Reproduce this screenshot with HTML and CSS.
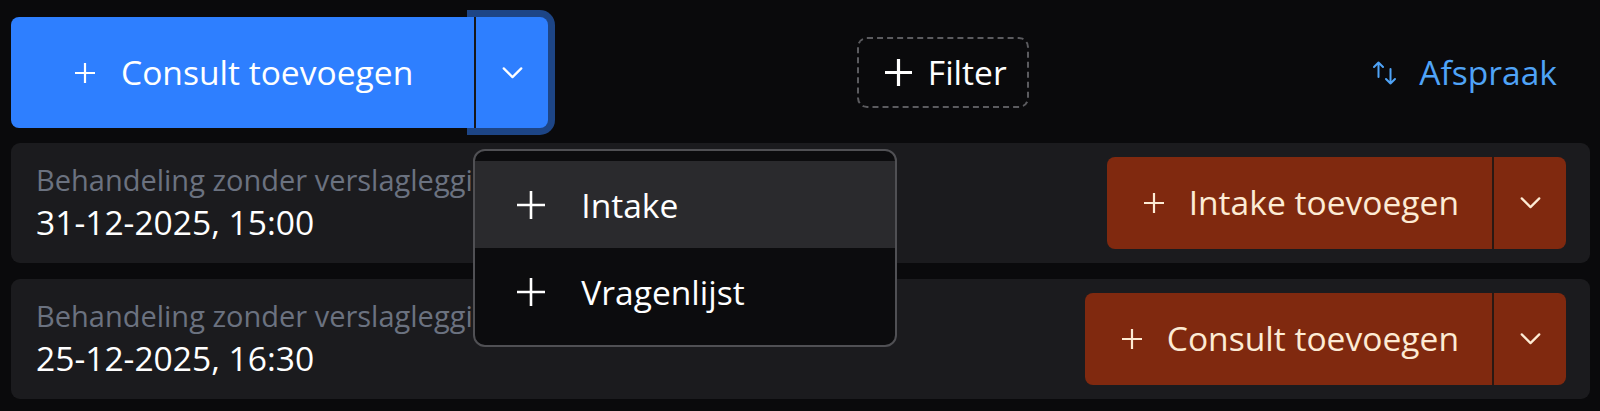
FILE: index.html
```html
<!DOCTYPE html>
<html lang="nl">
<head>
<meta charset="utf-8">
<title>Consulten</title>
<link rel="stylesheet" href="styles.css">
</head>
<body>
<div class="page">
  <header class="toolbar">
    <div class="split split--primary">
      <button class="split__main" type="button">
        <svg class="icon-plus" viewBox="0 0 20 20" aria-hidden="true"><path d="M10 0V20M0 10H20"/></svg>
        <span>Consult toevoegen</span>
      </button>
      <div class="split__more-wrap">
        <button class="split__more is-open" type="button" aria-label="Meer opties">
          <svg class="icon-chevron" viewBox="0 0 22 13" aria-hidden="true"><path d="M1.5 1.5L11 11L20.5 1.5"/></svg>
        </button>
        <div class="menu">
          <div class="menu__item is-active">
            <svg class="menu__plus" viewBox="0 0 28 28" aria-hidden="true"><path d="M14 0V28M0 14H28"/></svg>
            <span>Intake</span>
          </div>
          <div class="menu__item">
            <svg class="menu__plus" viewBox="0 0 28 28" aria-hidden="true"><path d="M14 0V28M0 14H28"/></svg>
            <span>Vragenlijst</span>
          </div>
        </div>
      </div>
    </div>

    <button class="filter" type="button">
      <svg class="filter__plus" viewBox="0 0 27 27" aria-hidden="true"><path d="M13.5 0V27M0 13.5H27"/></svg>
      <span>Filter</span>
    </button>

    <button class="sort" type="button">
      <svg class="sort__icon" viewBox="0 0 24 24" aria-hidden="true">
        <path d="M5.5 16V1.5M1 6L5.5 1.5L10 6"/>
        <path d="M17.5 8V22.5M13 18L17.5 22.5L22 18"/>
      </svg>
      <span>Afspraak</span>
    </button>
  </header>

  <main class="list">
    <section class="row">
      <div class="row__text">
        <div class="row__type">Behandeling zonder verslaglegging</div>
        <div class="row__date">31-12-2025, 15:00</div>
      </div>
      <div class="split split--accent">
        <button class="split__main" type="button">
          <svg class="icon-plus" viewBox="0 0 20 20" aria-hidden="true"><path d="M10 0V20M0 10H20"/></svg>
          <span>Intake toevoegen</span>
        </button>
        <button class="split__more" type="button" aria-label="Meer opties">
          <svg class="icon-chevron" viewBox="0 0 22 13" aria-hidden="true"><path d="M1.5 1.5L11 11L20.5 1.5"/></svg>
        </button>
      </div>
    </section>

    <section class="row">
      <div class="row__text">
        <div class="row__type">Behandeling zonder verslaglegging</div>
        <div class="row__date">25-12-2025, 16:30</div>
      </div>
      <div class="split split--accent">
        <button class="split__main" type="button">
          <svg class="icon-plus" viewBox="0 0 20 20" aria-hidden="true"><path d="M10 0V20M0 10H20"/></svg>
          <span>Consult toevoegen</span>
        </button>
        <button class="split__more" type="button" aria-label="Meer opties">
          <svg class="icon-chevron" viewBox="0 0 22 13" aria-hidden="true"><path d="M1.5 1.5L11 11L20.5 1.5"/></svg>
        </button>
      </div>
    </section>
  </main>
</div>
</body>
</html>
```
FILE: styles.css
```css
* { box-sizing: border-box; }

html, body {
  margin: 0;
  background: #0a0a0c;
}

body {
  font-family: "Open Sans", "Noto Sans", sans-serif;
  color: #ffffff;
  overflow: hidden;
}

button {
  font: inherit;
  color: inherit;
  border: 0;
  margin: 0;
  background: none;
  cursor: pointer;
}

.page {
  padding: 17px 10px 0 11px;
}

/* ---------- toolbar ---------- */
.toolbar {
  display: flex;
  align-items: center;
  justify-content: space-between;
  height: 111px;
}

.split {
  display: flex;
  align-items: stretch;
}

.split__main {
  display: flex;
  align-items: center;
  gap: 26px;
  font-size: 33.6px;
  line-height: 1;
  border-radius: 8px 0 0 8px;
  position: relative;
  z-index: 1;
}

.split__more {
  display: flex;
  align-items: center;
  justify-content: center;
  border-left: 2px solid #17171a;
  border-radius: 0 8px 8px 0;
  height: 100%;
}

.icon-plus {
  width: 20px;
  height: 20px;
  fill: none;
  stroke: currentColor;
  stroke-width: 2.2;
}

.icon-chevron {
  width: 21px;
  height: 12px;
  fill: none;
  stroke: currentColor;
  stroke-width: 2.4;
  stroke-linecap: round;
  stroke-linejoin: round;
}

/* primary (blue) split button */
.split--primary {
  height: 111px;
}

.split--primary .split__main {
  background: #2e7fff;
  color: #ffffff;
  padding: 0 61px 0 64px;
}

.split__more-wrap {
  position: relative;
  display: flex;
}

.split--primary .split__more {
  background: #2e7fff;
  color: #ffffff;
  width: 74px;
}

.split__more.is-open {
  box-shadow: 0 0 0 7px #1d4586;
  border-radius: 0 8px 8px 0;
}

/* dropdown menu */
.menu {
  position: absolute;
  top: calc(100% + 21px);
  left: -1px;
  width: 424px;
  padding: 10px 0 10px;
  background: #0c0c0e;
  border: 2px solid #505054;
  border-radius: 12px;
  z-index: 5;
}

.menu__item {
  display: flex;
  align-items: center;
  gap: 36px;
  height: 87px;
  padding-left: 42px;
  font-size: 33.6px;
  color: #ffffff;
}

.menu__item.is-active {
  background: #2a2a2d;
}

.menu__plus {
  width: 28px;
  height: 28px;
  fill: none;
  stroke: currentColor;
  stroke-width: 2.6;
}

/* filter */
.filter {
  display: flex;
  align-items: center;
  gap: 16px;
  height: 71px;
  padding: 0 20px 0 26px;
  border: 2px dashed #5b5b5f;
  border-radius: 10px;
  font-size: 33.6px;
  line-height: 1;
  color: #ffffff;
}

.filter__plus {
  width: 27px;
  height: 27px;
  fill: none;
  stroke: currentColor;
  stroke-width: 3.2;
}

/* sort */
.sort {
  display: flex;
  align-items: center;
  gap: 22px;
  height: 71px;
  padding: 0 33px 0 36px;
  font-size: 33.6px;
  line-height: 1;
  color: #4fa3f7;
}

.sort__icon {
  width: 24px;
  height: 24px;
  fill: none;
  stroke: currentColor;
  stroke-width: 2;
  stroke-linecap: round;
  stroke-linejoin: round;
}

/* ---------- list ---------- */
.list {
  display: flex;
  flex-direction: column;
  gap: 16px;
  margin-top: 15px;
}

.row {
  display: flex;
  align-items: center;
  justify-content: space-between;
  height: 120px;
  padding: 0 24px 0 25px;
  background: #1b1b1e;
  border-radius: 9px;
}

.row__text {
  display: flex;
  flex-direction: column;
  gap: 1px;
}

.row__type {
  font-size: 29px;
  line-height: 1.32;
  color: #6b7280;
  white-space: nowrap;
}

.row__date {
  font-size: 33.6px;
  line-height: 1.36;
  color: #ffffff;
}

/* accent (orange) split button */
.split--accent {
  height: 92px;
}

.split--accent .split__main {
  background: #80290f;
  color: #fdebd4;
  padding: 0 33px 0 37px;
  gap: 25px;
}

.split--accent .split__more {
  background: #80290f;
  color: #fdebd4;
  width: 74px;
  border-left-color: #2a1812;
}
```
